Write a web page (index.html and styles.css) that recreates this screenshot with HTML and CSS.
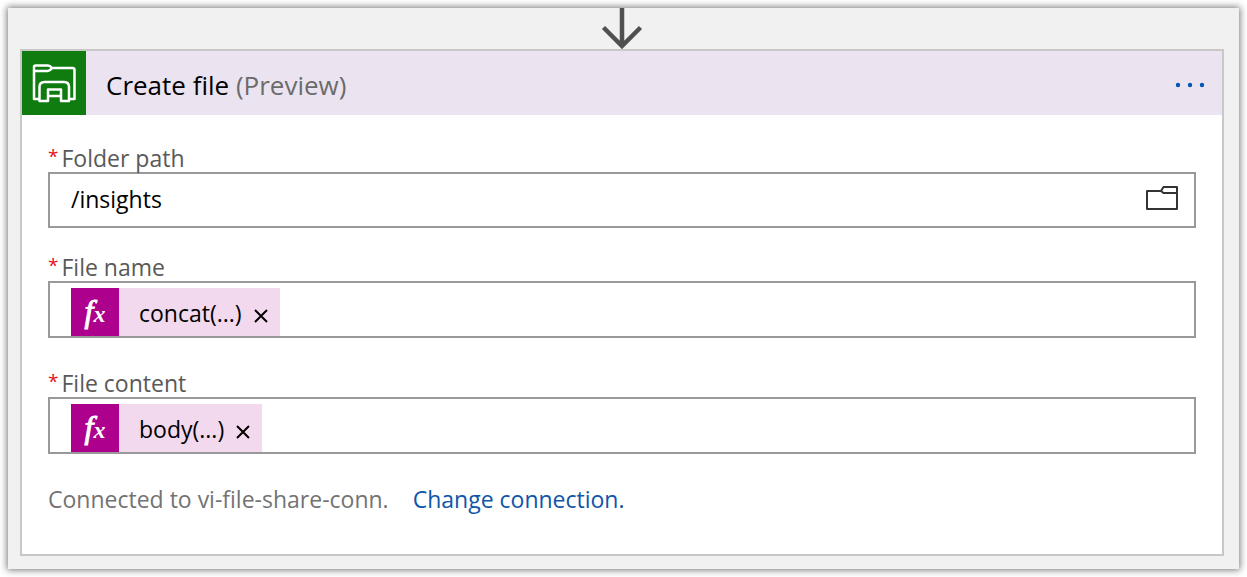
FILE: index.html
```html
<!DOCTYPE html>
<html lang="en">
<head>
<meta charset="utf-8">
<title>Create file</title>
<link rel="stylesheet" href="styles.css">
</head>
<body>
<main class="canvas">
  <svg class="arrow" width="42" height="41" viewBox="0 0 42 41" aria-hidden="true">
    <path d="M21 0V38M2.500 19.500L21 38L39.500 19.500" fill="none" stroke="#505050" stroke-width="4.500"/>
  </svg>
  <section class="card">
    <header class="card-header">
      <span class="connector-icon">
        <svg width="64" height="64" viewBox="0 0 64 64" fill="none" stroke="#fff" stroke-width="2.500" stroke-linejoin="round" aria-hidden="true">
          <path d="M17 48H12V16Q12 14.500 13.500 14.500H26Q28 14.500 30 17H50.500Q52.500 17 52.500 19V48H47"/>
          <path d="M12 20H26Q28 20 30 17"/>
          <path d="M17.500 50V36Q17.500 31 22.500 31H42Q47 31 47 36V50H39V38.500H26V50ZM26 45H39"/>
        </svg>
      </span>
      <h1 class="title">Create file <span class="muted">(Preview)</span></h1>
      <button class="menu" type="button" aria-label="More options">
        <svg width="30" height="6" viewBox="0 0 30 6" fill="#0058b8" aria-hidden="true"><circle cx="3" cy="3" r="2.200"/><circle cx="15" cy="3" r="2.200"/><circle cx="27" cy="3" r="2.200"/></svg>
      </button>
    </header>
    <form class="fields">
      <div class="field">
        <label class="label" for="folder"><span class="required">*</span>Folder path</label>
        <div class="box path-box">
          <input class="path-input" id="folder" type="text" value="/insights">
          <button class="browse" type="button" aria-label="Browse folders">
            <svg width="34" height="26" viewBox="0 0 34 26" fill="none" stroke="#333" stroke-width="2" stroke-linejoin="round" aria-hidden="true"><path d="M2 5H16L18.500 1H32V23H2ZM16 5L18.500 7H32"/></svg>
          </button>
        </div>
      </div>
      <div class="field">
        <span class="label" id="name-label"><span class="required">*</span>File name</span>
        <div class="box token-box" role="group" aria-labelledby="name-label">
          <span class="token"><span class="fx"><i class="f">f</i><i class="x">x</i></span><span class="token-text">concat(...)</span><button class="remove" type="button" aria-label="Remove concat"><svg width="16" height="16" viewBox="0 0 16 16" aria-hidden="true"><path d="M2 2L14 14M14 2L2 14" stroke="#000" stroke-width="2"/></svg></button></span>
        </div>
      </div>
      <div class="field content-field">
        <span class="label" id="content-label"><span class="required">*</span>File content</span>
        <div class="box token-box" role="group" aria-labelledby="content-label">
          <span class="token"><span class="fx"><i class="f">f</i><i class="x">x</i></span><span class="token-text">body(...)</span><button class="remove" type="button" aria-label="Remove body"><svg width="16" height="16" viewBox="0 0 16 16" aria-hidden="true"><path d="M2 2L14 14M14 2L2 14" stroke="#000" stroke-width="2"/></svg></button></span>
        </div>
      </div>
    </form>
    <footer class="connection"><span>Connected to vi-file-share-conn.</span><a class="change" href="#">Change connection.</a></footer>
  </section>
</main>
</body>
</html>
```
FILE: styles.css
```css
* { box-sizing: border-box; }
body {
  margin: 0;
  padding: 8px;
  background: #fff;
  color: #000;
  font: 23px/28px "Open Sans", "Noto Sans", sans-serif;
}
button { padding: 0; border: 0; background: none; cursor: pointer; }
svg { display: block; }
.canvas {
  display: flex;
  flex-direction: column;
  padding: 0 15px 13px 12px;
  background: #f1f1f1;
  box-shadow: 0 0 7px 1px #777;
}
.arrow { align-self: center; }
.card { border: 2px solid #c8c8c8; background: #fff; }
.card-header { display: flex; align-items: center; background: #ebe4f0; }
.connector-icon { width: 64px; height: 64px; background: #107c10; }
.title {
  flex: 1;
  margin: 0 0 0 20px;
  padding-top: 4px;
  font-size: 26px;
  font-weight: 400;
  line-height: 32px;
}
.muted { color: #6b6b6b; }
.menu { margin-right: 17px; padding-top: 4px; }
.fields { padding: 29px 26px 0; }
.field { margin-bottom: 25px; }
.content-field { margin-top: 31px; margin-bottom: 31px; }
.label { display: flex; gap: 3px; color: #595959; }
.required { color: #e81123; font-size: 19px; line-height: 24px; }
.box { display: flex; border: 2px solid #999; background: #fff; }
.path-box { align-items: center; height: 56px; padding: 0 15px 2px 21px; }
.path-input {
  flex: 1;
  min-width: 0;
  height: 40px;
  padding: 0;
  border: 0;
  outline: 0;
  background: none;
  color: #000;
  font: inherit;
  line-height: 40px;
}
.token-box { padding: 5px 21px 0; }
.token { display: flex; align-items: center; height: 48px; padding-right: 11px; background: #f2d9ee; }
.fx {
  display: flex;
  justify-content: center;
  align-items: baseline;
  width: 48px;
  height: 48px;
  margin-right: 20px;
  background: #ad008c;
  color: #fff;
  font-family: "Liberation Serif", serif;
  line-height: 46px;
}
.f { font-size: 32px; -webkit-text-stroke: 1px #fff; }
.x { font-size: 24px; font-weight: 700; }
.token-text { padding-top: 2px; }
.remove { margin: 8px 0 0 11px; }
.connection { display: flex; gap: 24px; padding: 0 26px 41px; color: #737373; }
.change { color: #0f56a8; text-decoration: none; }
```
